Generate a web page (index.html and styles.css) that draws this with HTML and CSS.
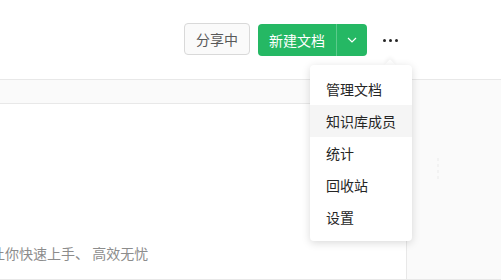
FILE: index.html
```html
<!DOCTYPE html>
<html>
<head>
    <title>知识库</title>
    <link rel="stylesheet" href="styles.css">
</head>
<body>
    <div class="header">
        <button class="btn btn-share">分享中</button>
        <div class="btn-group">
            <button class="btn btn-new">新建文档</button>
            <button class="btn btn-caret">
                <svg width="10" height="6" viewBox="0 0 10 6"><path d="M1 1l4 4 4-4" fill="none" stroke="#fff" stroke-width="1.2"/></svg>
            </button>
        </div>
        <div class="more">
            <span></span><span></span><span></span>
        </div>
    </div>

    <div class="layout">
        <div class="main">
            <div class="band"></div>
            <div class="content">
                <p class="tip">让你快速上手、 高效无忧</p>
            </div>
        </div>
        <div class="side">
            <div class="handle"></div>
        </div>
    </div>

    <div class="dropdown">
        <div class="arrow"></div>
        <ul class="menu">
            <li>管理文档</li>
            <li class="active">知识库成员</li>
            <li>统计</li>
            <li>回收站</li>
            <li>设置</li>
        </ul>
    </div>
</body>
</html>
```

FILE: styles.css
```css
html, body {
    margin: 0;
    padding: 0;
    background: #fff;
    font-family: "Noto Sans CJK SC", "Noto Sans", sans-serif;
    color: #262626;
}
body {
    position: relative;
    height: 280px;
    overflow: hidden;
}
.header {
    height: 79px;
    border-bottom: 1px solid #e8e8e8;
    display: flex;
    align-items: center;
    justify-content: flex-end;
    padding-right: 103px;
}
.btn {
    font-family: inherit;
    font-size: 14px;
    height: 32px;
    border-radius: 4px;
    cursor: pointer;
    padding: 0 12px;
    line-height: 30px;
}
.btn-share {
    width: 66px;
    height: 32px;
    background: #fafafa;
    border: 1px solid #d9d9d9;
    color: #595959;
    padding: 0;
    margin-top: -1px;
}
.btn-group {
    display: flex;
    margin-left: 8px;
    background: #25b864;
    border-radius: 4px;
}
.btn-new {
    width: 79px;
    background: transparent;
    border: none;
    color: #fff;
    padding: 0;
    border-right: 1px solid rgba(255, 255, 255, 0.25);
    border-radius: 4px 0 0 4px;
}
.btn-caret {
    width: 30px;
    background: transparent;
    border: none;
    padding: 0;
    display: flex;
    align-items: center;
    justify-content: center;
}
.more {
    display: flex;
    gap: 3px;
    margin-left: 16px;
    padding-top: 2px;
}
.more span {
    width: 3px;
    height: 3px;
    border-radius: 50%;
    background: #262626;
}
.layout {
    display: flex;
    height: 199px;
    border-bottom: 1px solid #e8e8e8;
}
.main {
    flex: 1;
    overflow: hidden;
}
.band {
    height: 23px;
    background: #fafafa;
    border-bottom: 1px solid #e8e8e8;
}
.content {
    padding-top: 138px;
}
.tip {
    margin: 0 0 0 -9px;
    font-size: 14px;
    line-height: 22px;
    color: #8c8c8c;
    white-space: nowrap;
}
.side {
    width: 95px;
    background: #fafafa;
    border-left: 1px solid #e8e8e8;
    padding: 78px 0 0 30px;
    box-sizing: border-box;
}
.handle {
    width: 2px;
    height: 24px;
    background: repeating-linear-gradient(#f2f2f2 0 3px, transparent 3px 6px);
}
.dropdown {
    position: absolute;
    top: 65px;
    left: 310px;
    width: 102px;
}
.arrow {
    position: absolute;
    top: -4px;
    left: 76px;
    width: 8px;
    height: 8px;
    background: #fff;
    transform: rotate(45deg);
    box-shadow: -2px -2px 4px rgba(0, 0, 0, 0.05);
}
.menu {
    position: relative;
    list-style: none;
    margin: 0;
    padding: 8px 0;
    background: #fff;
    border-radius: 4px;
    box-shadow: 0 2px 8px rgba(0, 0, 0, 0.15);
}
.menu li {
    height: 32px;
    line-height: 32px;
    padding: 0 16px;
    font-size: 14px;
    color: #262626;
    cursor: pointer;
}
.menu li.active {
    background: #f5f5f5;
}
```
